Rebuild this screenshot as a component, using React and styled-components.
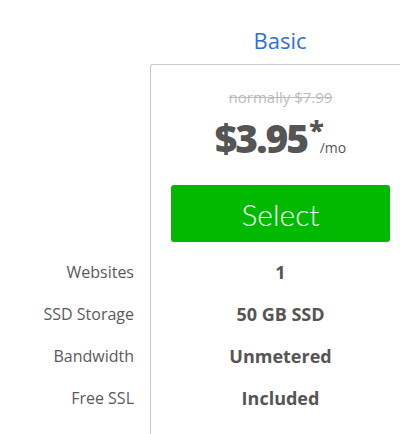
import React from "react";
import styled, { createGlobalStyle } from "styled-components";

const GlobalStyle = createGlobalStyle`
  html, body {
    margin: 0;
    padding: 0;
    background: #fff;
    overflow: hidden;
  }
  body {
    font-family: "Open Sans", "Liberation Sans", sans-serif;
    color: #555;
  }
`;

const Table = styled.div`
  display: flex;
  flex-direction: column;
  width: 410px;
`;

const Row = styled.div`
  display: grid;
  grid-template-columns: 150px 260px;
  height: ${(p) => p.height}px;
`;

const Label = styled.div`
  display: flex;
  align-items: center;
  justify-content: flex-end;
  padding-right: 16px;
  font-size: 16px;
  color: #5a5a5a;
`;

const PlanName = styled.div`
  display: flex;
  align-items: flex-end;
  justify-content: center;
  padding-bottom: 9px;
  font-size: 22px;
  color: #2f6fd8;
`;

const Cell = styled.div`
  display: flex;
  flex-direction: column;
  align-items: center;
  justify-content: ${(p) => (p.top ? "flex-start" : "center")};
  border-left: 1px solid #c9c9c9;
  border-top: ${(p) => (p.top ? "1px solid #c9c9c9" : "none")};
  border-top-left-radius: ${(p) => (p.top ? "3px" : "0")};
  padding: ${(p) => (p.top ? "22px 20px 0" : "0 20px")};
  font-size: 18px;
  font-weight: 700;
  color: #555;
`;

const OldPrice = styled.div`
  font-size: 15px;
  line-height: 20px;
  font-weight: 400;
  color: #bcbcbc;
  text-decoration: line-through;
`;

const Price = styled.div`
  display: flex;
  align-items: baseline;
  margin-top: 11px;
  height: 40px;
  font-size: 39px;
  line-height: 40px;
  font-weight: 800;
  color: #555;
  letter-spacing: -2px;
`;

const Star = styled.span`
  position: relative;
  top: -13px;
  margin-left: 2px;
  font-size: 27px;
  line-height: 0;
  letter-spacing: 0;
`;

const PerMonth = styled.span`
  margin-left: -4px;
  font-size: 14px;
  line-height: 0;
  font-weight: 400;
  letter-spacing: 0;
`;

const SelectButton = styled.button`
  margin-top: 27px;
  width: 100%;
  height: 57px;
  border: none;
  border-radius: 3px;
  background: #00b900;
  color: #fff;
  font-family: Lato, "Open Sans", sans-serif;
  font-weight: 300;
  font-size: 30px;
  cursor: pointer;
`;

const features = [
  ["Websites", "1"],
  ["SSD Storage", "50 GB SSD"],
  ["Bandwidth", "Unmetered"],
  ["Free SSL", "Included"],
  ["Domains", ""],
];

export default function App() {
  return (
    <>
      <GlobalStyle />
      <Table>
        <Row height={64}>
          <div />
          <PlanName>Basic</PlanName>
        </Row>
        <Row height={187}>
          <div />
          <Cell top>
            <OldPrice>normally $7.99</OldPrice>
            <Price>
              $3.95<Star>*</Star>
              <PerMonth>/mo</PerMonth>
            </Price>
            <SelectButton>Select</SelectButton>
          </Cell>
        </Row>
        {features.map(([label, value]) => (
          <Row key={label} height={42}>
            <Label>{label}</Label>
            <Cell>{value}</Cell>
          </Row>
        ))}
      </Table>
    </>
  );
}
